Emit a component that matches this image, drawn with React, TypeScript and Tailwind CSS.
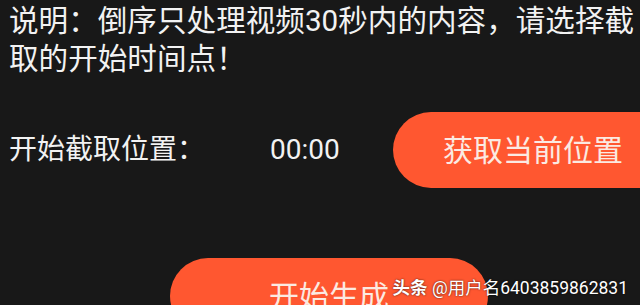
export default function App() {
  const font = { fontFamily: 'Roboto, "Noto Sans CJK SC", sans-serif' };
  return (
    <div
      className="relative w-[640px] h-[305px] overflow-hidden bg-[#181818] text-[#f2f2f2]"
      style={font}
    >
      <div className="pl-[9px] pt-[2px] text-[29.6px] leading-[38px] whitespace-nowrap">
        说明：倒序只处理视频30秒内的内容，请选择截
        <br />
        取的开始时间点！
      </div>

      <div className="mt-[34px] flex items-center h-[76px]">
        <div className="pl-[9px] w-[270px] text-[28px] shrink-0">开始截取位置：</div>
        <div className="w-[123px] text-[28px] shrink-0">00:00</div>
        <button className="shrink-0 h-[76px] w-[290px] rounded-full bg-[#ff5730] text-[#fbeae2] text-[30px] text-left pl-[50px]">
          获取当前位置
        </button>
      </div>

      <div className="mt-[70px] pl-[170px]">
        <button className="w-[318px] h-[76px] rounded-full bg-[#ff5730] text-[#fbeae2] text-[30px]">
          开始生成
        </button>
      </div>

      <div className="absolute right-[12px] bottom-[8px] text-[17.5px] leading-none text-white [text-shadow:0_0_2px_rgba(0,0,0,0.8)]">
        <span className="font-bold">头条</span> @用户名6403859862831
      </div>
    </div>
  );
}
